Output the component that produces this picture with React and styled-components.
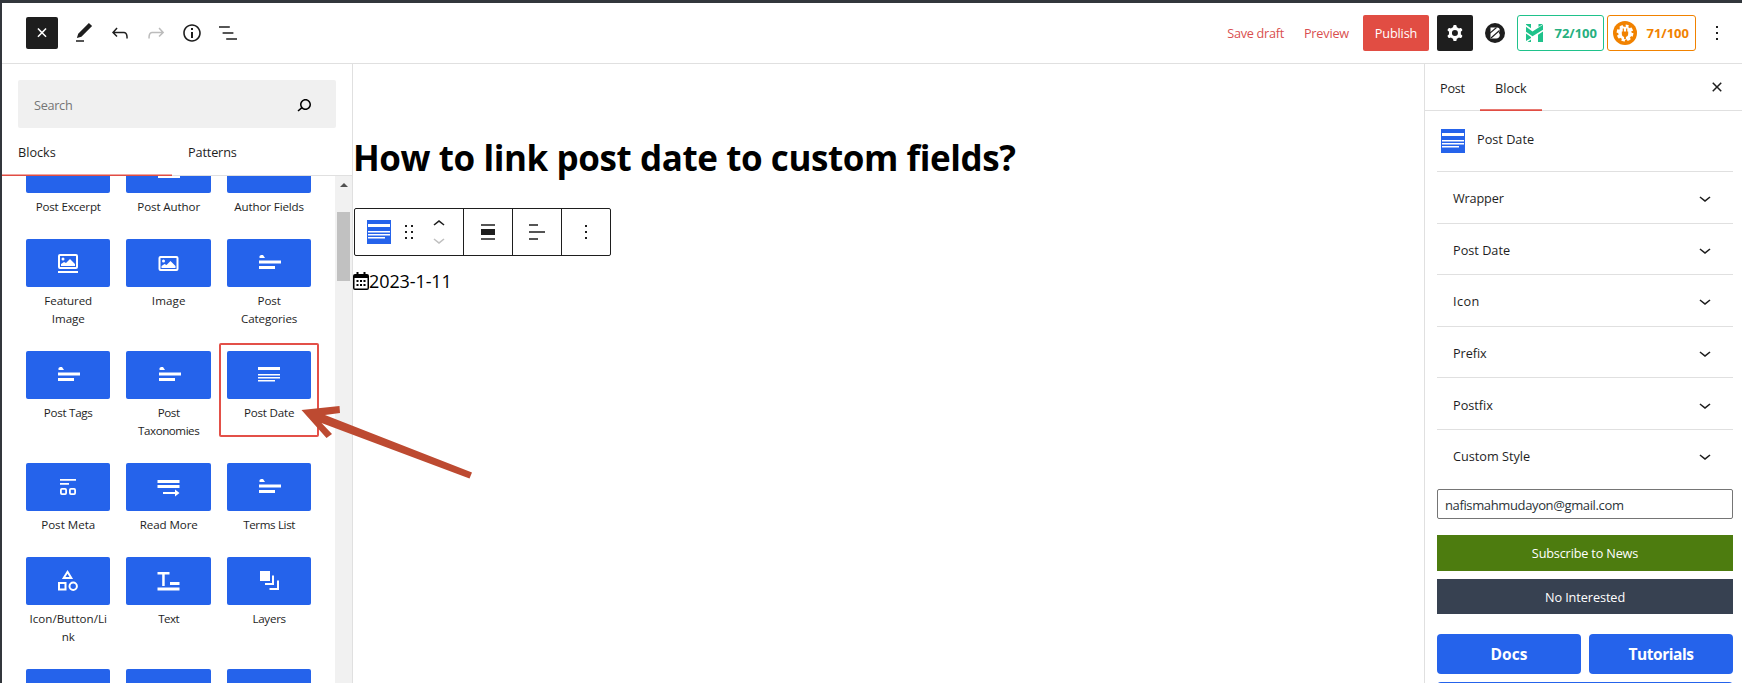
import React from "react";
import styled, { createGlobalStyle } from "styled-components";

const GlobalStyle = createGlobalStyle`
  * { box-sizing: border-box; }
  body { margin: 0; background: #fff; overflow: hidden; }
  button, input { font-family: inherit; }
`;

const Screen = styled.div`
  position: relative;
  width: 1742px;
  height: 683px;
  overflow: hidden;
  display: flex;
  flex-direction: column;
  background: #fff;
  border-top: 3px solid #32373c;
  border-left: 2px solid #32363c;
  color: #1e1e1e;
  font-family: "Open Sans", "Noto Sans", sans-serif;
  font-size: 12.7px;
`;

const Label = styled.span`
  letter-spacing: ${(p) => p.$ls || 0}px;
  white-space: nowrap;
`;

/* ---------- header ---------- */
const Header = styled.header`
  flex: none;
  height: 61px;
  border-bottom: 1px solid #e0e0e0;
  display: flex;
  justify-content: space-between;
  align-items: center;
  padding: 0 13px 0 24px;
`;
const ToolGroup = styled.div`
  display: flex;
  align-items: center;
`;
const ToolButton = styled.button`
  width: 36px;
  height: 36px;
  padding: 0;
  border: 0;
  background: none;
  display: flex;
  align-items: center;
  justify-content: center;
  color: ${(p) => (p.$dim ? "#bcbcbc" : "#1e1e1e")};
`;
const CloseInserter = styled(ToolButton)`
  width: 32px;
  height: 32px;
  margin-right: 8px;
  border-radius: 2px;
  background: #1e1e1e;
  color: #fff;
  svg { transform: rotate(45deg); }
`;
const TextLink = styled.a`
  color: #d94f4f;
  margin-right: ${(p) => p.$gap}px;
  line-height: 20px;
`;
const Publish = styled.button`
  width: 66px;
  height: 36px;
  padding: 0;
  border: 0;
  border-radius: 2px;
  background: #e14d43;
  color: #fff;
  font-size: 12.7px;
`;
const SettingsButton = styled(ToolButton)`
  margin-left: 8px;
  border-radius: 2px;
  background: #1e1e1e;
  color: #fff;
`;
const BuilderButton = styled(ToolButton)`
  width: 20px;
  margin: 0 4px 0 12px;
`;
const Score = styled.div`
  width: ${(p) => p.$w}px;
  height: 36px;
  margin-left: ${(p) => p.$ml}px;
  padding: 0 6px 0 ${(p) => p.$pl}px;
  border: 1px solid ${(p) => p.$tone};
  border-radius: 3px;
  color: ${(p) => p.$ink};
  display: flex;
  align-items: center;
  justify-content: space-between;
  font-size: 13px;
  font-weight: 700;
`;
const MoreButton = styled(ToolButton)`
  width: 24px;
  margin-left: 9px;
`;

/* ---------- body columns ---------- */
const Body = styled.div`
  flex: 1;
  min-height: 0;
  display: flex;
`;
const Inserter = styled.aside`
  width: 351px;
  flex: none;
  display: flex;
  flex-direction: column;
  border-right: 1px solid #e0e0e0;
`;
const SearchBox = styled.div`
  flex: none;
  height: 48px;
  margin: 16px 16px 0;
  padding: 1px 20px 0 16px;
  border-radius: 2px;
  background: #f0f0f0;
  display: flex;
  align-items: center;
  justify-content: space-between;
  color: #757575;
`;
const SearchIcon = styled.span`
  display: flex;
  color: #000;
`;
const InserterTabs = styled.div`
  flex: none;
  height: 48px;
  display: flex;
  border-bottom: 1px solid #e0e0e0;
`;
const InserterTab = styled.div`
  width: 170px;
  height: 48px;
  padding: 1px 0 0 ${(p) => p.$pl}px;
  line-height: 47px;
  font-weight: 500;
  box-shadow: ${(p) => (p.$active ? "inset 0 -1.5px 0 0 #e14d43" : "none")};
`;
const ScrollArea = styled.div`
  flex: 1;
  min-height: 0;
  display: flex;
  justify-content: space-between;
  overflow: hidden;
`;
const BlockGrid = styled.div`
  width: 301.4px;
  margin: -39px 0 0 16px;
  align-self: flex-start;
  display: grid;
  grid-template-columns: repeat(3, 1fr);
  grid-auto-rows: max-content;
  align-items: start;
`;
const BlockCell = styled.div`
  min-height: 94px;
  padding: 8px 8px 15px;
  border-radius: 2px;
  box-shadow: ${(p) => (p.$marked ? "inset 0 0 0 2px #e35048" : "none")};
`;
const Tile = styled.div`
  height: 48px;
  border-radius: 2px;
  background: #2563eb;
  color: #fff;
  display: flex;
  align-items: center;
  justify-content: center;
`;
const BlockName = styled.div`
  padding-top: 5px;
  font-size: 11.6px;
  line-height: 18px;
  text-align: center;
  white-space: pre;
  letter-spacing: ${(p) => p.$ls}px;
`;
const ScrollTrack = styled.div`
  width: 17px;
  background: #f1f1f1;
  padding: 7px 2px;
  display: flex;
  flex-direction: column;
  align-items: center;
`;
const ScrollUp = styled.div`
  width: 0;
  height: 0;
  border: 4px solid transparent;
  border-top-width: 0;
  border-bottom-color: #505050;
`;
const ScrollThumb = styled.div`
  width: 13px;
  height: 69px;
  margin-top: 25px;
  background: #c1c1c1;
`;

/* ---------- canvas ---------- */
const Canvas = styled.main`
  width: 1071px;
  flex: none;
  display: flex;
  flex-direction: column;
  align-items: flex-start;
`;
const Title = styled.h1`
  margin: 68px 0 0;
  height: 52px;
  line-height: 52px;
  font-size: 35px;
  font-weight: 700;
  letter-spacing: -0.42px;
  color: #000;
  white-space: nowrap;
`;
const BlockToolbar = styled.div`
  margin: 24px 0 0 1px;
  height: 48px;
  display: flex;
  border: 1px solid #1e1e1e;
  border-radius: 2px;
`;
const ToolbarGroup = styled.div`
  width: ${(p) => p.$w}px;
  display: flex;
  align-items: center;
  justify-content: ${(p) => (p.$first ? "flex-start" : "center")};
  padding-left: ${(p) => (p.$first ? 12 : 0)}px;
  border-left: ${(p) => (p.$first ? "0" : "1px solid #1e1e1e")};
`;
const BlueIcon = styled.span`
  width: 24px;
  height: 24px;
  flex: none;
  display: flex;
  background: #2563eb;
  color: #fff;
`;
const DragHandle = styled.span`
  display: flex;
  margin-left: 6px;
`;
const Movers = styled.span`
  display: flex;
  flex-direction: column;
  margin-left: 6px;
  svg + svg { margin-top: -8px; color: #c0c0c0; }
`;
const DateRow = styled.div`
  margin-top: 13px;
  height: 24px;
  display: flex;
  align-items: center;
  color: #000;
  font-size: 18px;
  line-height: 24px;
`;

/* ---------- settings sidebar ---------- */
const Sidebar = styled.aside`
  flex: 1;
  border-left: 1px solid #e0e0e0;
  display: flex;
  flex-direction: column;
`;
const SideTabs = styled.div`
  flex: none;
  height: 47px;
  display: flex;
  align-items: stretch;
  border-bottom: 1px solid #e0e0e0;
`;
const SideTab = styled.div`
  width: ${(p) => p.$w}px;
  padding-left: ${(p) => p.$pl}px;
  height: 47px;
  line-height: 48px;
  font-weight: 500;
  box-shadow: ${(p) => (p.$active ? "inset 0 -1.7px 0 0 #e14d43" : "none")};
`;
const SideClose = styled.span`
  display: flex;
  align-items: center;
  margin: 0 13px 0 auto;
`;
const SideContent = styled.div`
  padding: 0 9px 0 12px;
  display: flex;
  flex-direction: column;
`;
const BlockCard = styled.div`
  height: 60px;
  padding: 18px 0 0 4px;
  display: flex;
  font-weight: 500;
  line-height: 21px;
  gap: 12px;
`;
const Panel = styled.div`
  height: 51.6px;
  border-top: 1px solid #e0e0e0;
  padding: 2px 16px 0;
  display: flex;
  align-items: center;
  justify-content: space-between;
  font-weight: 500;
`;
const EmailField = styled.div`
  margin-top: 8.4px;
  height: 30px;
  border: 1px solid #757575;
  border-radius: 2px;
  padding: 1px 0 0 7px;
  font-size: 13px;
  line-height: 28px;
  color: #2c3338;
`;
const WideButton = styled.button`
  height: ${(p) => p.$h}px;
  margin-top: ${(p) => p.$mt}px;
  padding: 1px 0 0;
  border: 0;
  background: ${(p) => p.$bg};
  color: #fff;
  font-size: 12.7px;
  font-weight: 500;
`;
const LinkGrid = styled.div`
  margin-top: 20px;
  display: grid;
  grid-template-columns: 1fr 1fr;
  gap: 8px;
`;
const LinkButton = styled.a`
  grid-column: ${(p) => (p.$wide ? "1 / -1" : "auto")};
  height: 40px;
  line-height: 41px;
  border-radius: 4px;
  background: #2563eb;
  color: #fff;
  text-align: center;
  font-size: 15.5px;
  font-weight: 700;
`;
const PointerArrow = styled.svg`
  position: absolute;
  left: 298px;
  top: 397px;
`;

/* ---------- icons ---------- */
const Icon = ({ d, size = 24, children }) => (
  <svg width={size} height={size} viewBox="0 0 24 24" fill="currentColor">
    {d && <path d={d} />}
    {children}
  </svg>
);
const paths = {
  plus: "M11 12.5V17.5H12.5V12.5H17.5V11H12.5V6H11V11H6V12.5H11Z",
  edit: "M20.1 5.1L16.9 2 6.2 12.7l-1.3 4.4 4.5-1.3L20.1 5.1zM4 20.8h8v-1.5H4v1.5z",
  undo: "M18.3 11.7c-.6-.6-1.4-.9-2.3-.9H6.7l2.9-3.3-1.1-1-4.5 5L8.5 16l1-1-2.7-2.7H16c.5 0 .9.2 1.3.5 1 1 1 3.4 1 4.5v.3h1.5v-.2c0-1.5 0-4.3-1.5-5.7z",
  redo: "M15.6 6.5l-1.1 1 2.9 3.3H8c-.9 0-1.7.3-2.3.9-1.4 1.5-1.4 4.2-1.4 5.6v.2h1.5v-.3c0-1.1 0-3.5 1-4.5.3-.3.7-.5 1.3-.5h9.2L14.5 15l1.1 1.1 4.6-4.6-4.6-5z",
  info: "M12 3.2c-4.8 0-8.8 3.9-8.8 8.8 0 4.8 3.9 8.8 8.8 8.8 4.8 0 8.8-3.9 8.8-8.8 0-4.8-4-8.8-8.8-8.8zm0 16c-4 0-7.2-3.3-7.2-7.2C4.8 8 8 4.8 12 4.8s7.2 3.3 7.2 7.2c0 4-3.2 7.2-7.2 7.2zM11 17h2v-6h-2v6zm0-8h2V7h-2v2z",
  list: "M13.8 5.2H3v1.5h10.8V5.2zm-3.6 12v1.5H21v-1.5H10.2zm7.2-6H6.6v1.5h10.8v-1.5z",
  search: "M13.5 6C10.5 6 8 8.5 8 11.5c0 1.1.3 2.1.9 3l-3.4 3 1 1.1 3.4-2.9c1 .9 2.2 1.4 3.6 1.4 3 0 5.5-2.5 5.5-5.5C19 8.5 16.5 6 13.5 6zm0 9.5c-2.2 0-4-1.8-4-4s1.8-4 4-4 4 1.8 4 4-1.8 4-4 4z",
  down: "M17.5 11.6L12 16l-5.5-4.4.9-1.2L12 14l4.5-3.6 1 1.2z",
  up: "M6.5 12.4L12 8l5.5 4.4-.9 1.2L12 10l-4.5 3.6-1-1.2z",
  more: "M13 19h-2v-2h2v2zm0-6h-2v-2h2v2zm0-6h-2V5h2v2z",
  drag: "M8 7h2V5H8v2zm0 6h2v-2H8v2zm0 6h2v-2H8v2zm6-14v2h2V5h-2zm0 8h2v-2h-2v2zm0 6h2v-2h-2v2z",
  close: "M12 13.06l3.712 3.713 1.061-1.06L13.061 12l3.712-3.712-1.06-1.06L12 10.938 8.288 7.227l-1.061 1.06L10.939 12l-3.712 3.712 1.06 1.061L12 13.061z",
  alignCenter: "M5 4.2h14v1.5H5zM5 9h14v6H5zM5 18.2h14v1.5H5z",
  textLeft: "M4 4.2h9v1.5H4zM4 11.2h16v1.5H4zM4 18.2h9v1.5H4z",
};
const Cog = () => (
  <Icon>
    <path
      fillRule="evenodd"
      clipRule="evenodd"
      d="M10.289 4.836A1 1 0 0111.275 4h1.306a1 1 0 01.987.836l.244 1.466c.787.26 1.503.679 2.108 1.218l1.393-.522a1 1 0 011.216.437l.653 1.13a1 1 0 01-.23 1.273l-1.148.944a6.025 6.025 0 010 2.435l1.149.946a1 1 0 01.23 1.272l-.653 1.13a1 1 0 01-1.216.437l-1.394-.522c-.605.54-1.32.958-2.108 1.218l-.244 1.466a1 1 0 01-.987.836h-1.306a1 1 0 01-.986-.836l-.244-1.466a5.995 5.995 0 01-2.108-1.218l-1.394.522a1 1 0 01-1.217-.436l-.653-1.131a1 1 0 01.23-1.272l1.149-.946a6.026 6.026 0 010-2.435l-1.148-.944a1 1 0 01-.23-1.272l.653-1.131a1 1 0 011.217-.437l1.393.522a5.994 5.994 0 012.108-1.218l.244-1.466zM14.929 12a3 3 0 11-6 0 3 3 0 016 0z"
    />
  </Icon>
);
const BuilderIcon = () => (
  <svg width="20" height="20" viewBox="0 0 20 20">
    <circle cx="10" cy="10" r="10" fill="#1e1e1e" />
    <path d="M5.5 4.500H12c3.200 0 3.600 3.800 1.600 5.300 2.300 1.600 1.200 5.700-2.100 5.700h-6z" fill="#fff" />
    <path d="M5 10.200 11.500 4.500M6 15 14.500 7.500" stroke="#1e1e1e" strokeWidth="1.100" />
  </svg>
);
const GreenMark = () => (
  <svg width="18" height="18" viewBox="0 0 18 18" fill="#1fc28b">
    <path d="M0 0h5v4.200L0 .800zM12.500 0H17L12.500 3z" />
    <path d="M0 2.800l6.500 4.700L17 .800v5L6.500 12.300 0 7.800z" />
    <path d="M0 9.500l5 3.400v1L0 17zM17 7.500V18h-5v-7.300zM1.500 18 5 15.500V18z" />
  </svg>
);
const OrangeMark = () => (
  <svg width="24" height="24" viewBox="0 0 24 24">
    <circle cx="12" cy="12" r="12" fill="#f18200" />
    <circle cx="12" cy="12" r="6.800" fill="#fff" />
    <circle cx="12" cy="12" r="7.300" fill="none" stroke="#fff" strokeWidth="2.200" strokeDasharray="3.400 2.334" />
    <path d="M8.800 10.500h6.400v2.200c0 1.800-1 2.800-2.300 3.200V18h-1.800v-2.100c-1.300-.4-2.300-1.400-2.300-3.200z" fill="#f18200" />
    <path d="M10.300 7.500V11M13.700 7.500V11M12 3v3" stroke="#f18200" strokeWidth="1.200" />
  </svg>
);
const Calendar = () => (
  <svg width="16" height="18" viewBox="0 0 16 18">
    <path d="M3.500 0h2v2h5V0h2v2H14a2 2 0 0 1 2 2v12a2 2 0 0 1-2 2H2a2 2 0 0 1-2-2V4a2 2 0 0 1 2-2h1.500zM1.500 6v10.500h13V6z" fill="#000" fillRule="evenodd" />
    <path d="M3.500 8h2v2h-2zM7 8h2v2H7zM10.500 8h2v2h-2zM3.500 12h2v2h-2zM7 12h2v2H7zM10.500 12h2v2h-2z" fill="#000" />
  </svg>
);

const termLines = (
  <path d="M2.500 7V5l1.500-1h2l1 1.500L8 7zM2 9.500h22v3H2zM2 15h16v3H2z" />
);
const postDateLines = <path d="M1 4h22v3H1zM1 11h22v1.500H1zM1 14h22v1.500H1zM1 17h17v1.500H1z" />;
const glyphs = {
  none: null,
  author: <path d="M1 18h22v3H1z" />,
  featured: (
    <>
      <rect x="3" y="4" width="18" height="13" rx="1" fill="none" stroke="currentColor" strokeWidth="2" />
      <circle cx="7" cy="8" r="1.500" />
      <path d="M5 15v-2l3-2 2 1 4-4 5 5v2zM2 20h20v2H2z" />
    </>
  ),
  image: (
    <>
      <rect x="2.500" y="6" width="18" height="13" rx="1" fill="none" stroke="currentColor" strokeWidth="2" />
      <circle cx="6.500" cy="10" r="1.500" />
      <path d="M4.500 17v-2l3-2 2 1 4-4 5 5v2z" />
    </>
  ),
  terms: termLines,
  date: postDateLines,
  meta: (
    <>
      <path d="M4 4h16v1.700H4zM4 8h9v1.700H4z" />
      <rect x="4.900" y="13.900" width="5.200" height="5.200" rx="1" fill="none" stroke="currentColor" strokeWidth="1.800" />
      <rect x="13.900" y="13.900" width="5.200" height="5.200" rx="1" fill="none" stroke="currentColor" strokeWidth="1.800" />
    </>
  ),
  readMore: <path d="M.5 5h22v3H.5zM.5 10h22v3H.5zM6 17h12v-2.500l4.500 3.500-4.500 3.500V19H6z" />,
  shapes: (
    <g fill="none" stroke="currentColor" strokeWidth="2">
      <path d="M11.500 2.800 15.300 9H7.700z" />
      <path d="M3 14h6.500v6.500H3z" />
      <circle cx="17.200" cy="17.200" r="3.700" />
    </g>
  ),
  text: <path d="M.5 3h12v2.500H7.700V17H5.200V5.500H.5zM13 13h9.500v3H13zM.5 18.500h22v3H.5z" />,
  layers: <path d="M3 2h10v10H3zM15 6.500h2V16H8v-2h7zM20 11.500h2V21h-9.500v-2H20z" />,
};

const blocks = [
  ["none", "Post Excerpt", -0.17],
  ["author", "Post Author", -0.12],
  ["none", "Author Fields", -0.14],
  ["featured", "Featured\nImage", -0.1],
  ["image", "Image", 0.1],
  ["terms", "Post\nCategories", -0.12],
  ["terms", "Post Tags", -0.28],
  ["terms", "Post\nTaxonomies", -0.45],
  ["date", "Post Date", -0.18, true],
  ["meta", "Post Meta", 0],
  ["readMore", "Read More", -0.09],
  ["terms", "Terms List", -0.36],
  ["shapes", "Icon/Button/Li\nnk", 0],
  ["text", "Text", -0.55],
  ["layers", "Layers", -0.28],
  ["none", "", 0],
  ["none", "", 0],
  ["none", "", 0],
];
const panels = [
  ["Wrapper", -0.16],
  ["Post Date", 0],
  ["Icon", 0.4],
  ["Prefix", -0.06],
  ["Postfix", 0],
  ["Custom Style", 0],
];

export default function App() {
  return (
    <Screen>
      <GlobalStyle />
      <Header>
        <ToolGroup>
          <CloseInserter><Icon d={paths.plus} /></CloseInserter>
          <ToolButton><Icon d={paths.edit} /></ToolButton>
          <ToolButton><Icon d={paths.undo} /></ToolButton>
          <ToolButton $dim><Icon d={paths.redo} /></ToolButton>
          <ToolButton><Icon d={paths.info} /></ToolButton>
          <ToolButton><Icon d={paths.list} /></ToolButton>
        </ToolGroup>
        <ToolGroup>
          <TextLink $gap={20}><Label $ls={-0.29}>Save draft</Label></TextLink>
          <TextLink $gap={14}><Label $ls={-0.19}>Preview</Label></TextLink>
          <Publish><Label $ls={-0.12}>Publish</Label></Publish>
          <SettingsButton><Cog /></SettingsButton>
          <BuilderButton><BuilderIcon /></BuilderButton>
          <Score $w={87} $ml={8} $pl={8} $tone="#1fc28b" $ink="#26b07f">
            <GreenMark />
            <Label>72/100</Label>
          </Score>
          <Score $w={89} $ml={3} $pl={5} $tone="#f18200" $ink="#f18200">
            <OrangeMark />
            <Label>71/100</Label>
          </Score>
          <MoreButton><Icon d={paths.more} /></MoreButton>
        </ToolGroup>
      </Header>

      <Body>
        <Inserter>
          <SearchBox>
            <Label $ls={-0.3}>Search</Label>
            <SearchIcon><Icon d={paths.search} /></SearchIcon>
          </SearchBox>
          <InserterTabs>
            <InserterTab $active $pl={16}>Blocks</InserterTab>
            <InserterTab $pl={16}><Label $ls={-0.15}>Patterns</Label></InserterTab>
          </InserterTabs>
          <ScrollArea>
            <BlockGrid>
              {blocks.map(([glyph, name, ls, marked], i) => (
                <BlockCell key={i} $marked={marked}>
                  <Tile><Icon>{glyphs[glyph]}</Icon></Tile>
                  <BlockName $ls={ls}>{name}</BlockName>
                </BlockCell>
              ))}
            </BlockGrid>
            <ScrollTrack>
              <ScrollUp />
              <ScrollThumb />
            </ScrollTrack>
          </ScrollArea>
        </Inserter>

        <Canvas>
          <Title>How to link post date to custom fields?</Title>
          <BlockToolbar>
            <ToolbarGroup $first $w={108}>
              <BlueIcon><Icon>{postDateLines}</Icon></BlueIcon>
              <DragHandle><Icon d={paths.drag} /></DragHandle>
              <Movers>
                <Icon d={paths.up} />
                <Icon d={paths.down} />
              </Movers>
            </ToolbarGroup>
            <ToolbarGroup $w={49}><Icon d={paths.alignCenter} /></ToolbarGroup>
            <ToolbarGroup $w={49}><Icon d={paths.textLeft} /></ToolbarGroup>
            <ToolbarGroup $w={49}><Icon d={paths.more} /></ToolbarGroup>
          </BlockToolbar>
          <DateRow>
            <Calendar />
            <Label $ls={-0.1}>2023-1-11</Label>
          </DateRow>
        </Canvas>

        <Sidebar>
          <SideTabs>
            <SideTab $w={55} $pl={15}><Label $ls={-0.23}>Post</Label></SideTab>
            <SideTab $w={62} $pl={15} $active>Block</SideTab>
            <SideClose><Icon d={paths.close} /></SideClose>
          </SideTabs>
          <SideContent>
            <BlockCard>
              <BlueIcon><Icon>{postDateLines}</Icon></BlueIcon>
              Post Date
            </BlockCard>
            {panels.map(([name, ls]) => (
              <Panel key={name}>
                <Label $ls={ls}>{name}</Label>
                <Icon d={paths.down} />
              </Panel>
            ))}
            <EmailField><Label $ls={-0.37}>nafismahmudayon@gmail.com</Label></EmailField>
            <WideButton $h={36} $mt={16} $bg="#4d7c0f"><Label $ls={-0.17}>Subscribe to News</Label></WideButton>
            <WideButton $h={35} $mt={8} $bg="#374151"><Label $ls={-0.08}>No Interested</Label></WideButton>
            <LinkGrid>
              <LinkButton><Label $ls={0.1}>Docs</Label></LinkButton>
              <LinkButton><Label $ls={-0.45}>Tutorials</Label></LinkButton>
              <LinkButton $wide />
            </LinkGrid>
          </SideContent>
        </Sidebar>
      </Body>

      <PointerArrow width="180" height="90" viewBox="300 400 180 90">
        <path d="M301.500 410 339.500 406l.5 7-15 2L472 472.500l-2.500 6L321.500 423 332 434l-5.500 4z" fill="#bd4a31" />
      </PointerArrow>
    </Screen>
  );
}
